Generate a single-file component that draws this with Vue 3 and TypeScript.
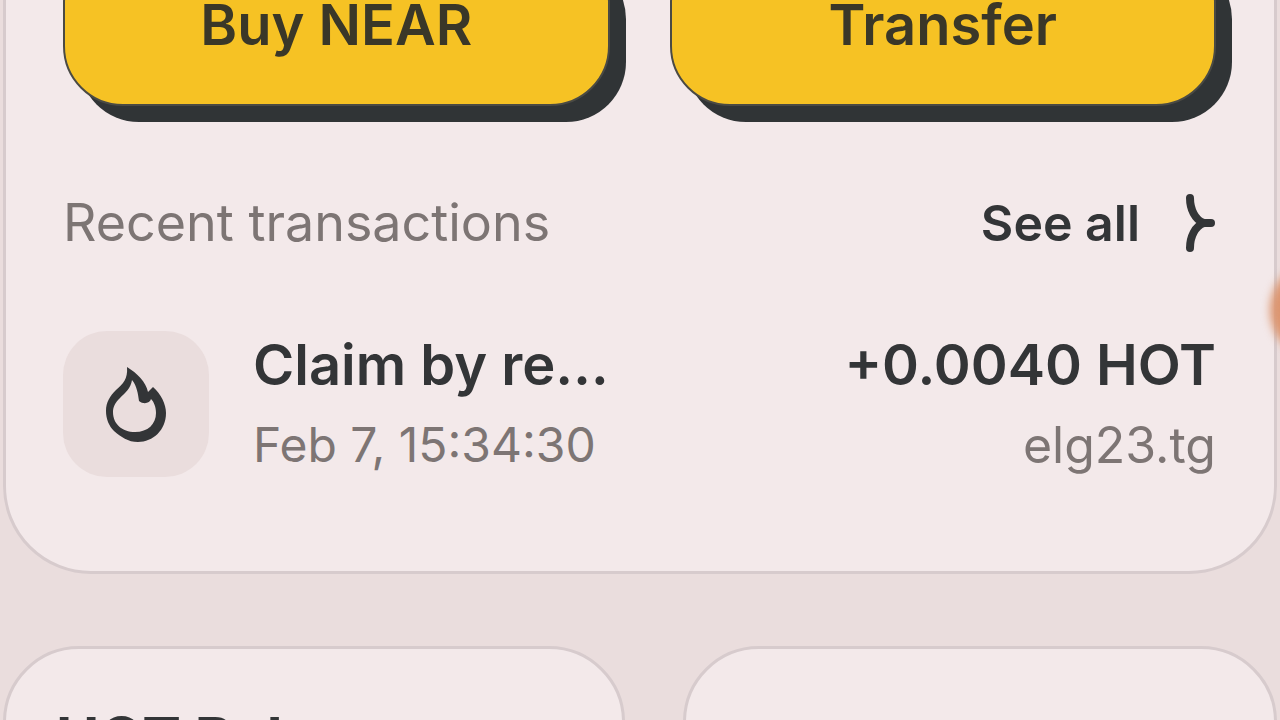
<script setup lang="ts">
interface Transaction {
  title: string
  date: string
  amount: string
  account: string
}

const actions: string[] = ['Buy NEAR', 'Transfer']

const transactions: Transaction[] = [
  {
    title: 'Claim by re…',
    date: 'Feb 7, 15:34:30',
    amount: '+0.0040 HOT',
    account: 'elg23.tg',
  },
]
</script>

<template>
  <main class="page">
    <section class="card wallet">
      <div class="actions">
        <button v-for="action in actions" :key="action" type="button" class="action">
          {{ action }}
        </button>
      </div>

      <header class="recent">
        <h2 class="recent-title">Recent transactions</h2>
        <a class="see-all" href="#transactions">
          See all
          <svg class="chevron" viewBox="0 0 32 60" aria-hidden="true">
            <path d="M6 5C6 16 11 27 20 30C11 33 6 44 6 55" />
            <path d="M17 30H27" />
          </svg>
        </a>
      </header>

      <ul id="transactions" class="list">
        <li v-for="item in transactions" :key="item.date" class="row">
          <span class="tile">
            <svg class="flame" viewBox="0 0 62 76" aria-hidden="true">
              <path
                fill-rule="evenodd"
                d="M22 1C32 7 41 16 43 26L48 21C56 28 61 38 61 47C61 64 48 76 33 76C23 76 16 71 9 65C4 60 1 53 1 45C1 36 5 30 11 24C18 18 23 13 22 1ZM27 14C26 22 20 27 15 32C10 37 8 41 8 46C8 58 17 66 30 66C43 66 51 58 51 47C51 41 49 36 46 33C45 37 39 39 34 35C33 28 32 20 27 14Z"
              />
            </svg>
          </span>
          <div class="details">
            <strong class="title">{{ item.title }}</strong>
            <span class="muted date">{{ item.date }}</span>
          </div>
          <div class="value">
            <strong class="title">{{ item.amount }}</strong>
            <span class="muted">{{ item.account }}</span>
          </div>
        </li>
      </ul>
    </section>

    <div class="tiles">
      <section class="card panel">
        <h2 class="panel-title">HOT Bal</h2>
      </section>
      <section class="card panel"></section>
    </div>

    <span class="glow" aria-hidden="true"></span>
  </main>
</template>

<style>
body {
  margin: 0;
  background: #eadddd;
}
</style>

<style scoped>
.page {
  position: relative;
  box-sizing: border-box;
  height: 100vh;
  padding: 0 3px;
  overflow: hidden;
  background: #eadddd;
  color: #333537;
  font-family: Inter, "Noto Sans", sans-serif;
}

.card {
  box-sizing: border-box;
  border: 3px solid #d7cbcd;
  border-radius: 88px;
  background: #f3e9ea;
}

.wallet {
  margin-top: -120px;
  padding: 60px 58px 94px 57px;
}

.actions {
  display: grid;
  grid-template-columns: 1fr 1fr;
  gap: 60px;
}

.action {
  height: 163px;
  border: 2px solid #4a4a44;
  border-radius: 60px;
  background: #f6c224;
  box-shadow: 16px 16px 0 #303436;
  color: #3a3728;
  font: 600 56px/64px Inter, "Noto Sans", sans-serif;
}

.recent {
  display: flex;
  align-items: center;
  justify-content: space-between;
  margin-top: 87px;
}

.recent-title {
  margin: 0;
  color: #7d7574;
  font-size: 52px;
  line-height: 60px;
  font-weight: 400;
}

.see-all {
  display: flex;
  align-items: center;
  gap: 44px;
  color: #333537;
  font-size: 50px;
  line-height: 60px;
  font-weight: 600;
  text-decoration: none;
}

.chevron {
  width: 32px;
  height: 60px;
  fill: none;
  stroke: #333537;
  stroke-width: 8;
  stroke-linecap: round;
  stroke-linejoin: round;
}

.list {
  margin: 78px 0 0;
  padding: 0;
  list-style: none;
}

.row {
  display: flex;
  align-items: center;
  gap: 44px;
  height: 146px;
}

.tile {
  display: grid;
  flex: none;
  place-items: center;
  width: 146px;
  height: 146px;
  border-radius: 44px;
  background: #eadddd;
}

.flame {
  width: 62px;
  height: 76px;
  fill: #333537;
}

.details,
.value {
  display: flex;
  flex-direction: column;
  padding-top: 2px;
}

.details {
  flex: none;
}

.value {
  flex: 1;
  align-items: flex-end;
}

.title {
  font-size: 56px;
  line-height: 80px;
  font-weight: 600;
  white-space: nowrap;
}

.muted {
  color: #7d7574;
  font-size: 50px;
  line-height: 80px;
  white-space: nowrap;
}

.date {
  font-size: 48px;
}

.tiles {
  display: grid;
  grid-template-columns: 622fr 594fr;
  gap: 58px;
  margin-top: 72px;
}

.panel {
  min-height: 300px;
  padding: 57px 50px;
  border-radius: 76px;
}

.panel-title {
  margin: 0;
  font-size: 58px;
  line-height: 64px;
  font-weight: 700;
}

.glow {
  position: absolute;
  top: 262px;
  right: -80px;
  width: 90px;
  height: 96px;
  border-radius: 50%;
  background: #dc956f;
  filter: blur(4px);
}
</style>
